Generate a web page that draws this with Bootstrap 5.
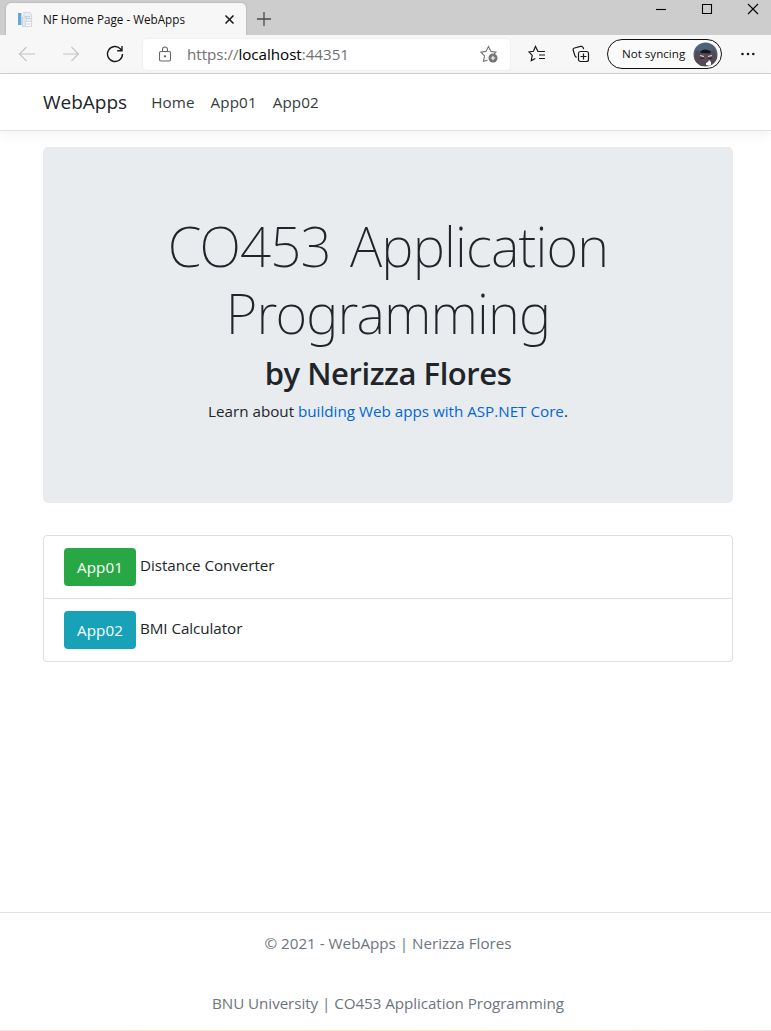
<!DOCTYPE html>
<html lang="en">
<head>
<meta charset="utf-8">
<title>NF Home Page - WebApps</title>
<link href="https://cdn.jsdelivr.net/npm/bootstrap@5.3.0/dist/css/bootstrap.min.css" rel="stylesheet">
<style>
body{font-family:"Open Sans","Noto Sans",sans-serif;font-size:15.2px;line-height:24px;color:#212529;height:1031px;overflow:hidden}
svg{display:block;flex:none;fill:none;stroke:#1b1b1b;stroke-width:1.1}
.titlebar{height:35px;background:#cdcdcd;padding-left:6px}
.tab-active{width:240px;height:32px;margin-top:3px;background:#f7f7f7;border-radius:5px 5px 0 0;box-shadow:0 0 2px rgba(0,0,0,.25);padding:0 10px 0 11px;font-size:11.7px;color:#111}
.toolbar-row{height:39px;background:#f7f7f7;border-bottom:1px solid #d0d0d0}
.address{width:367px;height:31px;background:#fff;border-radius:4px;box-shadow:0 0 2px rgba(0,0,0,.09);margin-left:19px;padding:0 12px 0 14px;color:#707070;letter-spacing:-.04px}
.address b{font-weight:400;color:#000}
.profile{width:115px;height:30px;border:1px solid #111;border-radius:15px;margin-left:16px;padding:0 3px 0 14px;font-size:11.6px;background:#fbfbfb;color:#111}
.site-nav{height:57px;border-bottom:1px solid #dee2e6;box-shadow:0 4px 12px rgba(0,0,0,.05);padding:0 43px}
.site-nav .navbar-brand{font-size:19px;line-height:30px;margin-right:16px;padding:0;color:#212529}
.site-nav .nav-link{padding:0 8px;color:#343a40;letter-spacing:.12px}
.page-main{width:690px;margin:16px 0 0 43px}
.hero{height:356px;background:#e8ecef;border-radius:5px;padding:66px 32px 0;margin-bottom:32px}
.hero h1{font-family:"Noto Sans","Open Sans",sans-serif;font-weight:200;font-size:54.5px;line-height:67.2px;letter-spacing:-.85px;word-spacing:6px;margin-bottom:7px}
.hero h2{font-size:31px;font-weight:600;line-height:38.4px;margin-bottom:6px;letter-spacing:-.45px}
.hero a{color:#0366d6;text-decoration:none}
.apps .list-group-item{padding:12px 20px;height:63px;border-color:#dfdfdf;letter-spacing:-.06px}
.apps .list-group-item:first-child{height:64px;border-radius:4px 4px 0 0}
.apps .list-group-item:last-child{border-radius:0 0 4px 4px}
.apps .list-group-item span{margin-top:5px}
.apps .btn{width:72px;height:38px;padding:6px 0;font-size:15.2px;line-height:26px;border:0;border-radius:4px;color:#fff;letter-spacing:.1px;margin-right:4px}
.btn-app1{background:#28a745}.btn-app2{background:#17a2b8}
.site-foot{height:118px;border-top:1px solid #dee2e6;line-height:60px;color:#6c757d;padding-left:5px}
.edge-line{height:1px;background:linear-gradient(90deg,#f4e3dd,#f5e8cd 30%,#f0edcb 60%,#f3dfdf)}
</style>
</head>
<body class="d-flex flex-column">
<div class="titlebar d-flex flex-shrink-0">
  <div class="tab-active d-flex align-items-center">
    <svg width="17" height="17" viewBox="0 0 17 17"><path d="M1 2h3v12H1z" fill="#62a8dc" stroke="none"/><path d="M4.500 2v12" stroke="#b9d5ea"/><path d="M7 1.500h5.500l2 2.500v9H7z" fill="#eceff2" stroke="#d3d8de"/><path d="M5.500 6.500h4v9h-4z" fill="#e3e8ed" stroke="#d3d8de"/><path d="M8.500 10.500h6v5h-6z" fill="#fff" stroke="#d3d8de"/><path d="M8 5.500h5M9 7.500h5M9.500 13h4" stroke="#c8cfd6"/></svg>
    <span style="margin-left:9px">NF Home Page - WebApps</span>
    <svg class="ms-auto" width="13" height="13" viewBox="0 0 13 13" style="stroke-width:1.6"><path d="M2.500 2.500l8 8M10.500 2.500l-8 8"/></svg>
  </div>
  <svg width="16" height="16" viewBox="0 0 16 16" style="margin:11px 0 0 10px;stroke:#4a4a4a;stroke-width:1.3"><path d="M8 1v14M1 8h14"/></svg>
  <div class="d-flex ms-auto" style="padding:2px 11px 0 0;gap:31px">
    <svg width="15" height="15" viewBox="0 0 15 15"><path d="M3 7.500h10" stroke="#000"/></svg>
    <svg width="15" height="15" viewBox="0 0 15 15"><path d="M3.500 2.500h9v9h-9z" stroke="#000"/></svg>
    <svg width="15" height="15" viewBox="0 0 15 15"><path d="M3 2l10 10M13 2L3 12" stroke="#000"/></svg>
  </div>
</div>
<div class="toolbar-row d-flex align-items-center flex-shrink-0">
  <svg width="18" height="16" viewBox="0 0 18 16" style="margin-left:18px;stroke:#c4c4c4"><path d="M17 8H1.500M8.500 1L1.500 8l7 7"/></svg>
  <svg width="18" height="16" viewBox="0 0 18 16" style="margin-left:26px;stroke:#c4c4c4"><path d="M1 8h15.500M9.500 1l7 7-7 7"/></svg>
  <svg width="18" height="18" viewBox="0 0 18 18" style="margin-left:26px;stroke-width:1.4"><path d="M16.500 9a7.500 7.500 0 1 1-2-5.100L16 5.500M16 1v4.700h-4.800"/></svg>
  <div class="address d-flex align-items-center">
    <svg width="16" height="17" viewBox="0 0 16 17" style="stroke:#666"><rect x="2.500" y="5.500" width="11" height="9.500" rx="1.500"/><path d="M5.500 5.500V3.500a2.500 2.500 0 0 1 5 0v2"/><circle cx="8" cy="10.300" r=".6" fill="#666"/></svg>
    <span style="margin-left:14px">https://<b>localhost</b>:44351</span>
    <svg class="ms-auto" width="18" height="18" viewBox="0 0 18 18" style="stroke:#737373"><path d="M7.500 15.300L3.500 16.300l1-5.300L1 7.200l5-.8L8.500 1.500l2.400 4.900 5 .8-1.600 1.600"/><circle cx="13" cy="13" r="4.500" fill="#737373" stroke="none"/><path d="M10.800 13h4.400M13 10.800v4.400" stroke="#fff"/></svg>
  </div>
  <svg width="18" height="18" viewBox="0 0 18 18" style="margin-left:18px;stroke-width:1.2"><path d="M10 6.500L7.500 1.500 5.400 6.300.9 6.900l3.300 3.500-.9 5.200 4-2.100M9.500 6.500H17M11 10H17M11 13.500H17"/></svg>
  <svg width="18" height="18" viewBox="0 0 18 18" style="margin-left:26px;margin-right:1px;stroke-width:1.2"><path d="M4.500 12.500L3 11 1.200 5.300q-.5-1.800 1.300-2.300l6-1.600q2-.5 2.700 1.300l.4 1.500"/><rect x="6.500" y="6.500" width="10" height="10" rx="2"/><path d="M11.500 8.500v6M8.500 11.500h6"/></svg>
  <div class="profile d-flex align-items-center justify-content-between"><span>Not syncing</span>
    <svg width="25" height="25" viewBox="0 0 25 25"><clipPath id="avatar"><circle cx="12.500" cy="12.500" r="12"/></clipPath><g clip-path="url(#avatar)" stroke="none"><path fill="#50637a" d="M0 0h25v25H0z"/><path fill="#554b57" d="M2 12l1-4 4 2 10-1 4-2 2 4 2 6-6 7H7l-6-5z"/><path fill="#15151c" d="M7 9.500q5-4 11 0l-1 2-9-.5z"/><path d="M7 13.500l4 1M15 14.500l4-1" stroke="#dedbe0" stroke-width="1.200"/><path d="M7 16q2 1 4 0M15 16q2 1 4 0" stroke="#29242e"/><path fill="#fff" d="M13 21l2-1 1-2 2 2v4l-5-1z"/></g></svg>
  </div>
  <svg width="16" height="6" viewBox="0 0 16 6" style="margin-left:18px"><g fill="#1b1b1b" stroke="none"><circle cx="2.500" cy="3" r="1.300"/><circle cx="8" cy="3" r="1.300"/><circle cx="13.300" cy="3" r="1.300"/></g></svg>
</div>
<nav class="site-nav navbar navbar-expand flex-shrink-0">
  <a class="navbar-brand" href="#">WebApps</a>
  <div class="navbar-nav"><a class="nav-link" href="#">Home</a><a class="nav-link" href="#">App01</a><a class="nav-link" href="#">App02</a></div>
</nav>
<main class="page-main">
  <section class="hero text-center">
    <h1>CO453 Application Programming</h1>
    <h2>by Nerizza Flores</h2>
    <p class="mb-0">Learn about <a href="#">building Web apps with ASP.NET Core</a>.</p>
  </section>
  <ul class="apps list-group">
    <li class="list-group-item d-flex"><a class="btn btn-app1" href="#">App01</a><span>Distance Converter</span></li>
    <li class="list-group-item d-flex"><a class="btn btn-app2" href="#">App02</a><span>BMI Calculator</span></li>
  </ul>
</main>
<footer class="site-foot mt-auto flex-shrink-0 text-center">
  <div>© 2021 - WebApps | Nerizza Flores</div>
  <div style="letter-spacing:-.06px">BNU University | CO453 Application Programming</div>
</footer>
<div class="edge-line flex-shrink-0"></div>
<script src="https://cdn.jsdelivr.net/npm/bootstrap@5.3.0/dist/js/bootstrap.bundle.min.js"></script>
</body>
</html>
